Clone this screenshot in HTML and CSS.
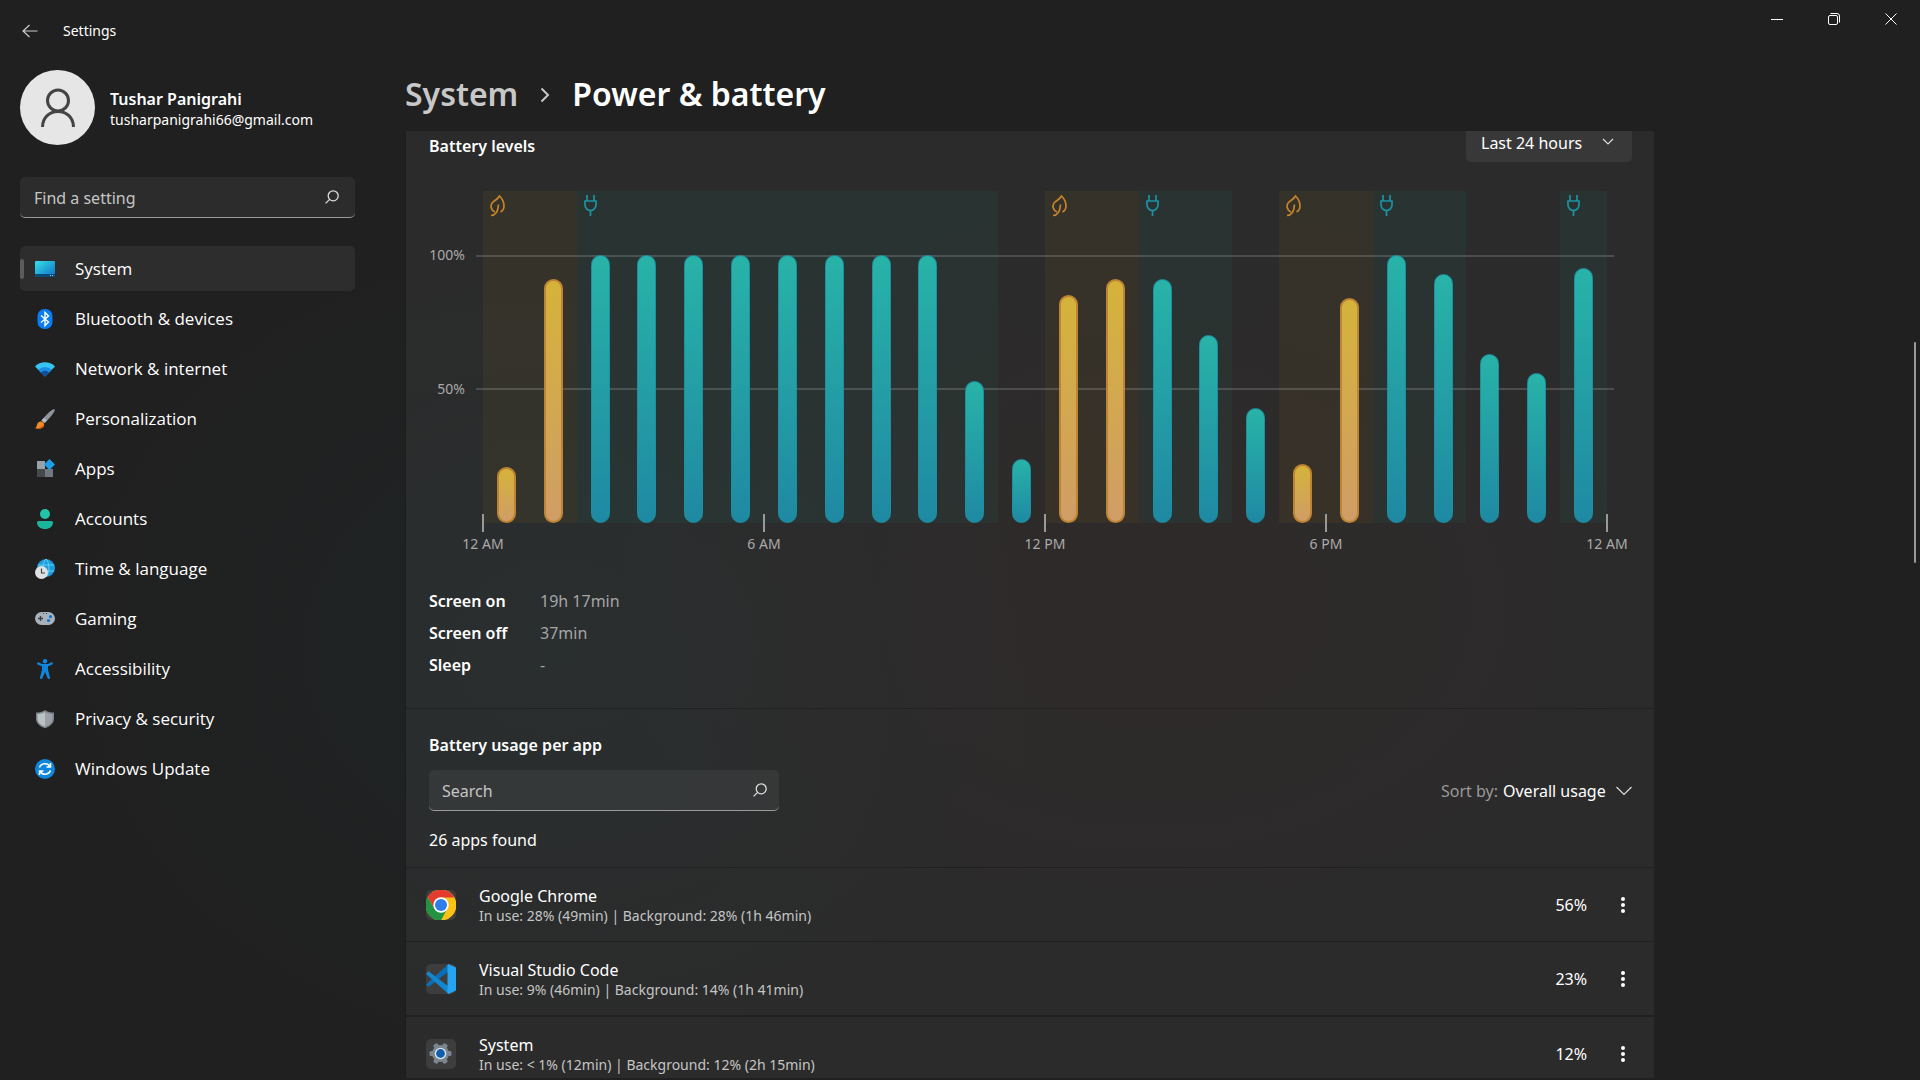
FILE: index.html
```html
<!DOCTYPE html>
<html lang="en">
<head>
<meta charset="utf-8">
<title>Settings</title>
<link rel="stylesheet" href="styles.css">
</head>
<body>
<div class="window">
  <header class="titlebar">
    <button class="back" aria-label="Back"><svg width="16" height="14" viewBox="0 0 16 14"><path d="M7.500 1 1 7l6.500 6M1 7h14.500"/></svg></button>
    <span class="app-name">Settings</span>
    <div class="window-controls">
      <button aria-label="Minimize"><svg width="12" height="12" viewBox="0 0 12 12"><path d="M0 6.500h12"/></svg></button>
      <button aria-label="Restore"><svg width="12" height="12" viewBox="0 0 12 12"><rect x=".5" y="2.500" width="9" height="9" rx="1.500"/><path d="M2.500.5H9A2.500 2.500 0 0 1 11.500 3v6.500"/></svg></button>
      <button aria-label="Close"><svg width="12" height="12" viewBox="0 0 12 12"><path d="M.5.5l11 11M11.500.5l-11 11"/></svg></button>
    </div>
  </header>

  <div class="body">
    <aside class="sidebar">
      <div class="profile">
        <div class="avatar"><svg width="36" height="40" viewBox="0 0 36 40"><circle cx="18" cy="12.500" r="10.500"/><path d="M2.500 39c0-9 6.500-15.500 15.500-15.500S33.500 30 33.500 39"/></svg></div>
        <div>
          <div class="name">Tushar Panigrahi</div>
          <div class="email">tusharpanigrahi66@gmail.com</div>
        </div>
      </div>
      <div class="search">
        <input type="text" placeholder="Find a setting" aria-label="Find a setting">
        <svg class="glass" width="14" height="14" viewBox="0 0 14 14"><circle cx="8.200" cy="5.800" r="5"/><path d="M4.600 9.400.6 13.400"/></svg>
      </div>
      <nav class="nav">
        <a class="active" href="#system"><svg width="20" height="20" viewBox="0 0 20 20"><defs><linearGradient id="scr" x1="0" y1="0" x2="1" y2="1"><stop offset="0" stop-color="#38e0ea"/><stop offset="1" stop-color="#0c6fc4"/></linearGradient></defs><rect y="2" width="20" height="16" rx="1" fill="url(#scr)"/><path d="M0 15h20v2a1 1 0 0 1-1 1H1a1 1 0 0 1-1-1z" fill="#0b4a78"/><path d="M15 16h1v1h-1zM17 16h1v1h-1z" fill="#7fd0f0"/></svg>System</a>
        <a href="#bluetooth"><svg width="20" height="20" viewBox="0 0 20 20"><rect x="2.500" width="15" height="20" rx="7" fill="#0a7cf5"/><path d="M6 6.500l7.500 6.500L10 16.500v-13L13.500 7 6 13.500" fill="none" stroke="#fff" stroke-width="1.400"/></svg>Bluetooth &amp; devices</a>
        <a href="#network"><svg width="20" height="20" viewBox="0 0 20 20"><path d="M0 7.500a14 14 0 0 1 20 0L10 17.500z" fill="#35c4f3"/><path d="M3.200 10.700a9.700 9.700 0 0 1 13.600 0L10 17.500z" fill="#1b8de0"/><path d="M6 13.500a5.600 5.600 0 0 1 8 0l-4 4z" fill="#0c4f9e"/></svg>Network &amp; internet</a>
        <a href="#personalization"><svg width="20" height="20" viewBox="0 0 20 20"><path d="M6.500 11.500C10 7 15 2 18.500.3c1-.4 1.600.3 1.200 1.200C18 5.500 13.500 10.500 9.500 14z" fill="#8d969e"/><path d="M9 9l3 2.500L9.500 14l-3-2.500z" fill="#b8bec4"/><path d="M0 19c2-.5 1.500-3 2.800-5 1.500-2 4-2 5.400-.5 1.400 1.600 1.200 3.800-.5 5-2.200 1.500-5.700 1.500-7.700.5z" fill="#f08a24"/><path d="M1.500 19.500c3-.5 5.500-2 7.500-4-.1 3.500-3.500 4.800-7.500 4z" fill="#e2571c"/></svg>Personalization</a>
        <a href="#apps"><svg width="20" height="20" viewBox="0 0 20 20"><path d="M2 2h8v8H2z" fill="#98a1a9"/><path d="M2 10h8v8H2z" fill="#45494d"/><path d="M10 10h8v8h-8z" fill="#6f7880"/><path d="M14.500 0 20 5.500 14.500 11 9 5.500z" fill="#1e9fea"/></svg>Apps</a>
        <a href="#accounts"><svg width="20" height="20" viewBox="0 0 20 20"><circle cx="10" cy="5" r="5" fill="#22c3a8"/><path d="M3.500 12h13A1.500 1.500 0 0 1 18 13.500c0 4-3.500 6.500-8 6.500s-8-2.500-8-6.500A1.500 1.500 0 0 1 3.500 12z" fill="#1cb49a"/></svg>Accounts</a>
        <a href="#time"><svg width="20" height="20" viewBox="0 0 20 20"><circle cx="11" cy="9" r="9" fill="#1b9bdc"/><path d="M11 0c-4 4-4 14 0 18M11 0c4 4 4 14 0 18M3 6h16M3 12h16" fill="none" stroke="#5fd3f5"/><circle cx="6.500" cy="13.500" r="6.500" fill="#dfe1e3"/><path d="M6.500 9.500v4.500h3.500" fill="none" stroke="#444" stroke-width="1.200"/></svg>Time &amp; language</a>
        <a href="#gaming"><svg width="20" height="20" viewBox="0 0 20 20"><rect y="3" width="20" height="13" rx="6.500" fill="#a9b1b9"/><path d="M3 9.500h5M5.500 7v5" stroke="#3b4046" stroke-width="1.300"/><circle cx="15.500" cy="7.700" r="1.600" fill="#1275d1"/><circle cx="13.500" cy="11.500" r="1.600" fill="#1275d1"/><path d="M8 4.500h1M11 4.500h1" stroke="#444"/></svg>Gaming</a>
        <a href="#accessibility"><svg width="20" height="20" viewBox="0 0 20 20" fill="#0f86dc"><circle cx="10" cy="2.200" r="2.200"/><path d="M2.500 3.500c-.7.900-.4 1.900.5 2.300L7 7.300v3.500L5 18.500c-.2 1.700 1.900 2 2.500.6L10 13l2.500 6.100c.6 1.400 2.700 1.100 2.500-.6l-2-7.700V7.300l4-1.500c.9-.4 1.200-1.400.5-2.300-.5-.4-1-.3-1.500 0L13 5H7L4 3.500c-.5-.3-1-.4-1.500 0z"/></svg>Accessibility</a>
        <a href="#privacy"><svg width="20" height="20" viewBox="0 0 20 20"><path d="M10 1c2.500 2 5.500 2.500 9 2.500v6c0 5-4 8-9 9.700-5-1.700-9-4.700-9-9.700v-6C4.500 3.500 7.500 3 10 1z" fill="#7d858c"/><path d="M10 3c2 1.200 4.500 2 7.500 2v4.500c0 4-3.200 6.600-7.500 8.200z" fill="#9ba1a7"/><path d="M10 3C8 4.200 5.500 5 2.500 5v4.500c0 4 3.200 6.600 7.500 8.200z" fill="#bcc1c5"/></svg>Privacy &amp; security</a>
        <a href="#update"><svg width="20" height="20" viewBox="0 0 20 20"><circle cx="10" cy="10" r="10" fill="#0f86dc"/><path d="M4.500 8.500C6 4 12.500 3.500 15 7.500M15.500 11.500C14 16 7.500 16.500 5 12.500M15.500 4v4h-4M4.500 16v-4h4" fill="none" stroke="#fff" stroke-width="1.500"/></svg>Windows Update</a>
      </nav>
    </aside>

    <main class="main">
      <h1 class="breadcrumb"><a href="#system">System</a><svg width="10" height="16" viewBox="0 0 10 16"><path d="M1.500 1.500 8 8l-6.500 6.500"/></svg><span>Power &amp; battery</span></h1>
      <div class="scroll">
        <section class="card levels">
          <div class="levels-head">
            <h2>Battery levels</h2>
            <div class="period">
              <select aria-label="Period"><option>Last 24 hours</option></select>
              <svg width="12" height="8" viewBox="0 0 12 8"><path d="M1 1l5 5 5-5"/></svg>
            </div>
          </div>
          <div class="chart">
            <div class="y-axis"><span class="y100">100%</span><span class="y50">50%</span></div>
            <div class="plot" id="plot"></div>
          </div>
          <dl class="stats">
            <dt>Screen on</dt><dd>19h 17min</dd>
            <dt>Screen off</dt><dd>37min</dd>
            <dt>Sleep</dt><dd>-</dd>
          </dl>
        </section>
        <section class="card usage">
          <h2>Battery usage per app</h2>
          <div class="filters">
            <div class="search">
              <input type="text" placeholder="Search" aria-label="Search apps">
              <svg class="glass" width="14" height="14" viewBox="0 0 14 14"><circle cx="8.200" cy="5.800" r="5"/><path d="M4.600 9.400.6 13.400"/></svg>
            </div>
            <div class="sort">
              <label for="sort">Sort by:</label>
              <select id="sort"><option>Overall usage</option></select>
              <svg width="16" height="10" viewBox="0 0 16 10"><path d="M.5 1 8 8.500 15.500 1"/></svg>
            </div>
          </div>
          <p class="count">26 apps found</p>
        </section>
        <article class="card app">
          <svg class="app-icon" width="30" height="30" viewBox="0 0 30 30"><defs><clipPath id="tile"><rect width="30" height="30" rx="5"/></clipPath></defs><rect width="30" height="30" rx="5" fill="#3d3d3d"/><g clip-path="url(#tile)"><circle cx="15" cy="15" r="15.500" fill="#fbc116"/><path d="M1.600 7.200A15.500 15.500 0 0 1 28.400 7.500H15L8.500 18.700z" fill="#e33b2e"/><path d="M1.600 7.200 8.500 18.700 15 22.500l6.200-3.700L15 30.500A15.500 15.500 0 0 1 1.600 7.200z" fill="#229342"/></g><circle cx="15" cy="15" r="7.700" fill="#fff"/><circle cx="15" cy="15" r="6" fill="#2f7de9"/></svg>
          <div class="app-text"><h3>Google Chrome</h3><p>In use: 28% (49min) | Background: 28% (1h 46min)</p></div>
          <span class="share">56%</span>
          <button class="more" aria-label="More options"><svg width="4" height="16" viewBox="0 0 4 16"><circle cx="2" cy="2" r="2"/><circle cx="2" cy="8" r="2"/><circle cx="2" cy="14" r="2"/></svg></button>
        </article>
        <article class="card app">
          <svg class="app-icon" width="30" height="30" viewBox="0 0 30 30"><rect width="30" height="30" rx="5" fill="#3d3d3d"/><path d="M0 20.500 2.500 23 22.500 7.500V0z" fill="#0a6fb8"/><path d="M0 10 2.500 7.200 22.500 22.500V30z" fill="#1287d0"/><path d="M22.500 0 30 3.500v23L22.500 30l-1-1V1z" fill="#25a5f1"/></svg>
          <div class="app-text"><h3>Visual Studio Code</h3><p>In use: 9% (46min) | Background: 14% (1h 41min)</p></div>
          <span class="share">23%</span>
          <button class="more" aria-label="More options"><svg width="4" height="16" viewBox="0 0 4 16"><circle cx="2" cy="2" r="2"/><circle cx="2" cy="8" r="2"/><circle cx="2" cy="14" r="2"/></svg></button>
        </article>
        <article class="card app">
          <svg class="app-icon" width="30" height="30" viewBox="0 0 30 30"><rect width="30" height="30" rx="5" fill="#3d3d3d"/><g fill="#7b858e"><circle cx="14.500" cy="14.500" r="8.500"/><rect x="3.500" y="12" width="22" height="5" rx="1.500"/><rect x="3.500" y="12" width="22" height="5" rx="1.500" transform="rotate(60 14.500 14.500)"/><rect x="3.500" y="12" width="22" height="5" rx="1.500" transform="rotate(120 14.500 14.500)"/></g><circle cx="14.500" cy="14.500" r="5.800" fill="#dfe3e6"/><circle cx="14.500" cy="14.500" r="4.400" fill="#0f5fae"/></svg>
          <div class="app-text"><h3>System</h3><p>In use: &lt; 1% (12min) | Background: 12% (2h 15min)</p></div>
          <span class="share">12%</span>
          <button class="more" aria-label="More options"><svg width="4" height="16" viewBox="0 0 4 16"><circle cx="2" cy="2" r="2"/><circle cx="2" cy="8" r="2"/><circle cx="2" cy="14" r="2"/></svg></button>
        </article>
      </div>
    </main>
  </div>
  <div class="scroll-thumb"></div>
</div>
<script src="chart.js"></script>
</body>
</html>
```
FILE: styles.css
```css
* { box-sizing: border-box; }
body, h1, h2, h3, p, dl, dd { margin: 0; }
body {
  color: #fff;
  font: 16px/20px "Noto Sans", "Open Sans", sans-serif;
  background:
    radial-gradient(ellipse 500px 420px at 29% 60%, rgba(20, 60, 70, .11), transparent),
    radial-gradient(ellipse 600px 420px at 60% 56%, rgba(80, 20, 20, .08), transparent),
    #202020;
}
button, select, input { font: inherit; color: inherit; background: none; border: 0; padding: 0; outline: 0; }
button { cursor: pointer; }
select { appearance: none; }
a { color: inherit; text-decoration: none; }
svg { flex: none; display: block; }
h2 { font-size: 16px; line-height: 20px; font-weight: 600; }

.window { height: 100vh; display: flex; flex-direction: column; overflow: hidden; position: relative; }

.titlebar { height: 62px; display: flex; align-items: center; padding-left: 22px; flex: none; }
.titlebar svg { fill: none; stroke: #fff; }
.back svg { stroke: #ccc; stroke-width: 1.2; }
.app-name { margin-left: 25px; font-size: 14px; }
.window-controls { margin: 0 1px 0 auto; align-self: flex-start; display: flex; }
.window-controls button { width: 57px; height: 38px; display: grid; place-items: center; }

.body { flex: 1; min-height: 0; display: flex; }
.sidebar { width: 335px; margin: 8px 50px 0 20px; flex: none; }
.profile { display: flex; align-items: center; gap: 15px; }
.profile > :last-child { padding-top: 2px; }
.avatar { width: 75px; height: 75px; border-radius: 50%; background: #e6e6e6; display: grid; place-items: center; }
.avatar svg { fill: none; stroke: #444; stroke-width: 3; }
.name { font-weight: 600; line-height: 22px; }
.email { font-size: 14px; }

.search { height: 41px; display: flex; align-items: center; padding: 0 16px 0 14px; background: rgba(255, 255, 255, .055); border-radius: 5px; border-bottom: 1px solid #9a9a9a; }
.search input { flex: 1; min-width: 0; line-height: 22px; padding-top: 1px; }
.search input::placeholder { color: #c5c5c5; opacity: 1; }
.glass { fill: none; stroke: #ddd; stroke-width: 1.3; }
.sidebar .search { margin-top: 32px; }

.nav { margin-top: 28px; display: flex; flex-direction: column; gap: 5px; font-family: "Open Sans", "Noto Sans", sans-serif; font-size: 17px; }
.nav a { height: 45px; display: flex; align-items: center; gap: 20px; padding: 1px 0 0 15px; border-radius: 5px; position: relative; line-height: 20px; }
.nav .active { background: #2d2d2d; }
.nav .active::before { content: ""; position: absolute; left: 0; top: 13px; width: 4px; height: 20px; border-radius: 2px; background: #5c5c5c; }

.main { flex: 1; min-width: 0; max-width: 1249px; display: flex; flex-direction: column; padding-bottom: 2px; }
.breadcrumb { height: 69px; flex: none; display: flex; align-items: center; padding-bottom: 5px; font-size: 32px; line-height: 40px; font-weight: 600; }
.breadcrumb a { color: #c8c8c8; }
.breadcrumb svg { margin: 2px 22px 0 22px; fill: none; stroke: #c8c8c8; stroke-width: 2; }

.scroll { flex: 1; min-height: 0; overflow: hidden; border: solid #1c1c1c; border-width: 0 0 0 1px; }
.card { background: rgba(255, 255, 255, .05); }
.card + .card { margin-top: 1px; }

.levels { padding: 0 22px 32px 23px; height: 577px; }
.levels-head { display: flex; justify-content: space-between; }
.levels-head h2 { margin-top: 5px; }
.period { margin-top: -10px; height: 41px; width: 166px; display: grid; align-items: center; background: #383838; border-radius: 5px; }
.period > * { grid-area: 1 / 1; }
.period select { height: 41px; padding: 2px 0 0 15px; }
.period svg { justify-self: end; margin-right: 18px; pointer-events: none; }
.period svg, .sort svg { fill: none; stroke: #ddd; stroke-width: 1.2; }

.chart { display: flex; margin-top: 29px; color: #aaa; font-size: 14px; }
.y-axis { width: 36px; margin-right: 11px; text-align: right; display: flex; flex-direction: column; }
.y100 { margin-top: 54px; }
.y50 { margin-top: 114px; }
.plot { flex: 1; height: 332px; margin: 0 25px 0 7px; display: grid; grid-template-columns: repeat(24, 1fr); grid-template-rows: 64px 133px 135px; position: relative; }
.band { grid-row: 1 / 4; }
.band svg { fill: none; stroke-width: 1.7; margin: 4px 0 0 7px; }
.band.saver { background: rgba(180, 145, 30, .08); }
.band.saver svg { stroke: #c6842e; }
.band.plugged { background: rgba(30, 150, 130, .08); }
.band.plugged svg { stroke: #1d93a5; }
.line { grid-column: 1 / -1; height: 2px; margin: 0 -7px; background: rgba(255, 255, 255, .16); }
.line.full { grid-row: 2; }
.line.half { grid-row: 3; }
.bar { grid-row: 2 / 4; align-self: end; justify-self: center; width: 19px; border-radius: 10px; background: linear-gradient(#28b3a8, #1f89a3); border: 1px solid #1d8fa2; }
.bar.saver { background: linear-gradient(#d5b33a, #d09d66); border: 2px solid #bd8434; }
.tick { position: absolute; top: 323px; width: 80px; margin-left: -40px; text-align: center; }
.tick::before { content: ""; display: block; width: 2px; height: 18px; margin: 0 auto 2px; background: #999; }

.stats { display: grid; grid-template-columns: 111px 1fr; row-gap: 12px; margin-top: 68px; }
.stats dt { font-weight: 600; }
.stats dd { color: #a5a5a5; }

.usage { height: 158px; padding: 26px 22px 0 23px; }
.filters { display: flex; justify-content: space-between; align-items: center; margin-top: 15px; }
.filters .search { width: 350px; padding: 0 12px 0 13px; }
.sort { display: flex; align-items: center; }
.sort label { color: #999; margin-right: 5px; }
.sort svg { margin-left: 10px; }
.count { margin-top: 19px; }

.app { height: 73px; display: flex; align-items: center; padding: 0 29px 0 20px; }
.app + .app:last-child { margin-top: 2px; }
.app-text { margin-left: 23px; padding-top: 2px; flex: 1; }
.app h3 { font-size: 16px; line-height: 20px; font-weight: 400; }
.app p { font-size: 14px; line-height: 20px; color: #c5c5c5; }
.more { margin-left: 34px; }
.more svg { fill: #fff; }

.scroll-thumb { position: absolute; right: 4px; top: 342px; width: 2px; height: 221px; border-radius: 2px; background: #999; }
```
FILE: chart.js
```js
// Hourly battery level in percent.
const levels = [21, 91, 100, 100, 100, 100, 100, 100, 100, 100, 53, 24, 85, 91, 91, 70, 43, 22, 84, 100, 93, 63, 56, 95];
// Spans of hours with battery saver on or the charger plugged in.
const bands = [[0, 2, "saver"], [2, 11, "plugged"], [12, 14, "saver"], [14, 16, "plugged"], [17, 19, "saver"], [19, 21, "plugged"], [23, 24, "plugged"]];
const labels = ["12 AM", "6 AM", "12 PM", "6 PM", "12 AM"];
const icons = {
  saver: '<svg width="15" height="22" viewBox="0 0 15 22"><path d="M1 20.500c4 0 7-3.500 7.500-11M5 17C1 15.500-.2 10.500 2.500 7.500 4.500 5.500 8 4 9.500 1c2.500 2.500 4.500 6 4.500 10 0 3-1 4.700-3.500 6"/></svg>',
  plugged: '<svg width="13" height="22" viewBox="0 0 13 22"><path d="M3 0v6M10 0v6M1 6h11v4a5.500 5.500 0 0 1-11 0zM6.500 15.500V21"/></svg>'
};
const inSaver = h => bands.some(([a, b, k]) => k === "saver" && h >= a && h < b);

let html = bands.map(([a, b, k]) => `<div class="band ${k}" style="grid-column:${a + 1}/${b + 1}">${icons[k]}</div>`).join("");
html += '<div class="line full"></div><div class="line half"></div>';
html += levels.map((v, h) => `<div class="bar${inSaver(h) ? " saver" : ""}" style="grid-column:${h + 1};height:${v}%"></div>`).join("");
html += labels.map((t, i) => `<div class="tick" style="left:${i * 25}%">${t}</div>`).join("");
document.getElementById("plot").innerHTML = html;
```
